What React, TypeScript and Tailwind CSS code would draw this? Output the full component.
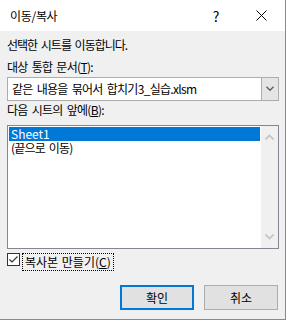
import { useState } from "react";

const font = "font-['Noto_Sans_CJK_KR',sans-serif]";

function Chevron({ up, className }: { up?: boolean; className?: string }) {
  return (
    <svg width="9" height="6" viewBox="0 0 9 6" className={className}>
      <path
        d={up ? "M0.5 5.5 L4.5 1.5 L8.5 5.5" : "M0.5 0.5 L4.5 4.5 L8.5 0.5"}
        fill="none"
        stroke="currentColor"
        strokeWidth="1.6"
      />
    </svg>
  );
}

export default function App() {
  const [selected, setSelected] = useState(0);
  const [copy, setCopy] = useState(true);
  const sheets = ["Sheet1", "(끝으로 이동)"];

  return (
    <div className={`w-[286px] h-[320px] bg-[#f0f0f0] border-r border-b border-[#8a8a8a] flex flex-col text-[12px] text-black ${font}`}>
      {/* title bar */}
      <div className="h-[31px] bg-white flex items-center shrink-0">
        <span className="pl-[10px] leading-[14px] tracking-[-0.3px]">이동/복사</span>
        <span className="ml-auto w-[14px] text-center text-[14px] leading-[14px] mr-[33px]">?</span>
        <svg width="11" height="11" viewBox="0 0 11 11" className="mr-[18px]">
          <path d="M0.5 0.5 L10.5 10.5 M10.5 0.5 L0.5 10.5" stroke="#000" strokeWidth="1" />
        </svg>
      </div>

      <div className="pl-[7px] flex flex-col w-[279px]">
        <p className="mt-[7px] leading-[14px] tracking-[-1px] [word-spacing:2px]">선택한 시트를 이동합니다.</p>

        <p className="mt-[8px] leading-[14px] tracking-[-0.7px] [word-spacing:2px]">
          대상 통합 문서(<span className="underline underline-offset-1">T</span>):
        </p>

        <div className="mt-[3px] h-[24px] bg-white border border-[#adadad] flex items-center">
          <span className="pl-[4px] leading-[14px] flex-1 whitespace-nowrap tracking-[-0.7px] [word-spacing:2px]">같은 내용을 묶어서 합치기3_실습.xlsm</span>
          <div className="w-[17px] h-full bg-[#e5e5e5] border-l border-[#adadad] flex items-center justify-center text-[#606060]">
            <Chevron className="w-[8px]" />
          </div>
        </div>

        <p className="mt-[2px] leading-[14px] tracking-[-0.7px] [word-spacing:2px]">
          다음 시트의 앞에(<span className="underline underline-offset-1">B</span>):
        </p>

        <div className="mt-[8px] h-[124px] bg-white border border-[#828790] flex">
          <ul className="flex-1 p-[1px]">
            {sheets.map((s, i) => (
              <li
                key={s}
                onClick={() => setSelected(i)}
                className={`h-[14px] leading-[14px] pl-[2px] ${i === 1 ? "tracking-[-0.8px] [word-spacing:2px]" : ""} ${selected === i ? "bg-[#0078d7] text-white" : ""}`}
              >
                {s}
              </li>
            ))}
          </ul>
          <div className="w-[17px] bg-[#f0f0f0] flex flex-col items-center justify-between py-[8px] text-[#c2c2c2]">
            <Chevron up />
            <Chevron />
          </div>
        </div>

        <label className="mt-[4px] h-[18px] flex items-start" onClick={() => setCopy(!copy)}>
          <span className="w-[13px] h-[13px] border border-[#333] bg-white flex items-center justify-center">
            {copy && (
              <svg width="11" height="11" viewBox="0 0 11 11">
                <path d="M1.5 5.5 L4 8 L9.5 2.5" fill="none" stroke="#333" strokeWidth="1.2" />
              </svg>
            )}
          </span>
          <span className="ml-[2px] h-[18px] px-[2px] border border-dotted border-black leading-[16px] [word-spacing:1px]">
            복사본 만들기(<span className="underline underline-offset-1">C</span>)
          </span>
        </label>

        <div className="mt-[14px] flex justify-end gap-[10px] pr-[1px]">
          <button className="w-[74px] h-[25px] bg-[#e1e1e1] border-2 border-[#0078d7] leading-[14px]">확인</button>
          <button className="w-[74px] h-[25px] bg-[#e1e1e1] border border-[#adadad] leading-[14px]">취소</button>
        </div>
      </div>
    </div>
  );
}
